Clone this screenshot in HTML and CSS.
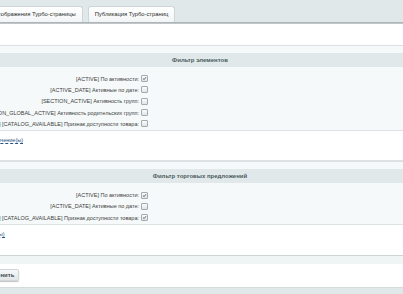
FILE: index.html
```html
<!DOCTYPE html>
<html>
<head>
    <meta charset="UTF-8">
    <title>Турбо-страницы</title>
    <link rel="stylesheet" href="styles.css">
</head>
<body>
    <div class="page">
        <div class="tabs">
            <div class="tab">Настройки отображения Турбо-страницы</div>
            <div class="tab">Публикация Турбо-страниц</div>
        </div>
        <div class="tab-line"></div>

        <div class="blank"></div>

        <div class="section">
            <div class="heading">Фильтр элементов</div>
            <div class="fields">
                <div class="row">
                    <div class="label">[ACTIVE] По активности:</div>
                    <span class="cb checked"><svg viewBox="0 0 7 7"><path d="M1.5 3.6 L3 5 L5.6 1.6" /></svg></span>
                </div>
                <div class="row">
                    <div class="label">[ACTIVE_DATE] Активные по дате:</div>
                    <span class="cb"></span>
                </div>
                <div class="row">
                    <div class="label">[SECTION_ACTIVE] Активность групп:</div>
                    <span class="cb"></span>
                </div>
                <div class="row">
                    <div class="label">[SECTION_GLOBAL_ACTIVE] Активность родительских групп:</div>
                    <span class="cb"></span>
                </div>
                <div class="row">
                    <div class="label">[AVAILABLE] [CATALOG_AVAILABLE] Признак доступности товара:</div>
                    <span class="cb"></span>
                </div>
            </div>
            <div class="links">
                <a class="add-link">Добавить значение(ы)</a>
            </div>
        </div>

        <div class="section">
            <div class="heading">Фильтр торговых предложений</div>
            <div class="fields">
                <div class="row">
                    <div class="label">[ACTIVE] По активности:</div>
                    <span class="cb checked"><svg viewBox="0 0 7 7"><path d="M1.5 3.6 L3 5 L5.6 1.6" /></svg></span>
                </div>
                <div class="row">
                    <div class="label">[ACTIVE_DATE] Активные по дате:</div>
                    <span class="cb"></span>
                </div>
                <div class="row">
                    <div class="label">[AVAILABLE] [CATALOG_AVAILABLE] Признак доступности товара:</div>
                    <span class="cb checked"><svg viewBox="0 0 7 7"><path d="M1.5 3.6 L3 5 L5.6 1.6" /></svg></span>
                </div>
            </div>
            <div class="links links-last">
                <a class="add-link">Добавить поле(ы)</a>
            </div>
        </div>

        <div class="buttons">
            <span class="btn">Применить</span>
        </div>
        <div class="footer"></div>
    </div>
</body>
</html>
```

FILE: styles.css
```css
body, html {
    margin: 0;
    padding: 0;
    overflow: hidden;
    background: #fff;
    font-family: "Liberation Sans", Arial, sans-serif;
    font-size: 5.5px;
    color: #404040;
}

.page {
    width: 610px;
    margin-left: -105px;
}

/* tabs */
.tabs {
    height: 22px;
    background: #e1e8ea;
    display: flex;
    align-items: flex-end;
    gap: 5px;
    padding-left: 63px;
}

.tab {
    height: 15px;
    line-height: 15px;
    padding: 0 6px;
    border: 1px solid #cfd6d8;
    border-bottom: none;
    border-radius: 3px 3px 0 0;
    background: linear-gradient(#ffffff, #f2f5f6);
    color: #2b2b2b;
    font-size: 5.8px;
    white-space: nowrap;
}

.tab-line {
    height: 2px;
    background: linear-gradient(#a7acae, #c9cfd1);
}

.blank {
    height: 21px;
    background: #fff;
}

/* sections */
.section {
    border-top: 1px solid #dbe1e2;
    padding-top: 7px;
    background: #f5f9f9;
}

.heading {
    height: 14px;
    line-height: 14px;
    background: #e0e8ea;
    text-align: center;
    font-size: 6px;
    font-weight: bold;
    color: #4b5a5e;
}

.fields {
    padding: 6px 0 1px;
    background: #f5f9f9;
    border-bottom: 1px solid #dde3e4;
}

.row {
    height: 11.3px;
    display: flex;
    align-items: center;
}

.label {
    width: 244px;
    text-align: right;
    white-space: nowrap;
}

.cb {
    width: 7px;
    height: 7px;
    margin-left: 2px;
    box-sizing: border-box;
    border: 1px solid #a3abae;
    border-radius: 1px;
    background: linear-gradient(#fbfcfc, #dfe4e6);
}

.cb svg {
    display: block;
    width: 5px;
    height: 5px;
}

.cb svg path {
    fill: none;
    stroke: #4a5459;
    stroke-width: 1.2;
}

.links {
    height: 30px;
    padding-left: 71px;
    padding-top: 6px;
    box-sizing: border-box;
    background: #fff;
    border-bottom: 1px solid #dde3e4;
}

.links-last {
    height: 31px;
    padding-left: 64px;
    border-bottom-color: #cfd4d5;
}

.add-link {
    color: #264f86;
    border-bottom: 1px dashed #264f86;
    white-space: nowrap;
}

/* buttons */
.buttons {
    border-top: 8px solid #eff4f5;
    height: 31px;
    padding-top: 5px;
    padding-left: 81px;
    box-sizing: border-box;
    background: #fff;
}

.btn {
    display: inline-block;
    height: 12px;
    line-height: 12px;
    padding: 0 5px;
    border-radius: 2px;
    background: linear-gradient(#f8fafa, #dfe5e7);
    box-shadow: 0 1px 1px rgba(0, 0, 0, 0.25), inset 0 0 0 1px #d0d7d9;
    font-size: 6px;
    font-weight: bold;
    color: #3f4b4e;
}

.footer {
    height: 10px;
    background: #e0e8ea;
    border-top: 1px solid #d3dbdd;
}
```
